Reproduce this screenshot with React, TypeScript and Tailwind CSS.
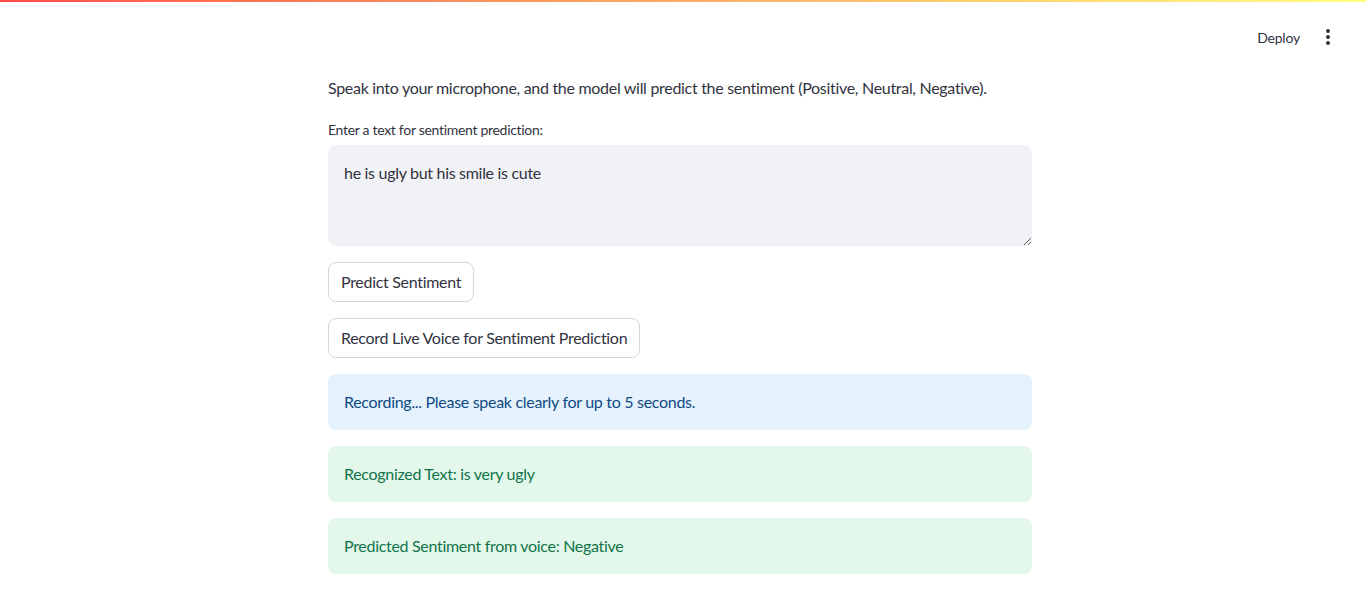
import React from "react";

const font = { fontFamily: '"Source Sans Pro", Lato, "Liberation Sans", sans-serif' };

function MoreIcon() {
  return (
    <svg width="24" height="24" viewBox="0 0 24 24" fill="#31333f">
      <circle cx="12" cy="6" r="2" />
      <circle cx="12" cy="12" r="2" />
      <circle cx="12" cy="18" r="2" />
    </svg>
  );
}

function Alert({ kind, children }: { kind: "info" | "success"; children: React.ReactNode }) {
  const cls =
    kind === "info"
      ? "bg-[#e5f2fc] text-[#0e4a84]"
      : "bg-[#e3f7eb] text-[#11744a]";
  return (
    <div className={`h-[56px] rounded-lg px-4 flex items-center text-[16px] tracking-[-0.3px] ${cls}`}>
      {children}
    </div>
  );
}

export default function App() {
  return (
    <div className="relative min-h-[607px] bg-white text-[#31333f]" style={font}>
      {/* decoration bar */}
      <div className="absolute top-0 left-0 right-0 h-[2px] bg-gradient-to-r from-[#ff4b4b] to-[#fffd80]" />

      {/* header */}
      <header className="h-[60px] flex items-center justify-end pr-[26px] gap-4">
        <span className="text-[14px] pt-[14px] tracking-[-0.2px]">Deploy</span>
        <span className="pt-[14px] flex">
          <MoreIcon />
        </span>
      </header>

      {/* main */}
      <main className="w-[704px] ml-[328px] pt-[15px] flex flex-col">
        <p className="text-[16px] leading-[26px] mb-[18px] tracking-[-0.3px]">
          Speak into your microphone, and the model will predict the sentiment (Positive, Neutral, Negative).
        </p>
        <label className="text-[14px] leading-[21px] mb-[5px] tracking-[-0.3px]">Enter a text for sentiment prediction:</label>
        <textarea
          className="h-[101px] w-full rounded-lg bg-[#f0f2f6] px-4 pt-[16px] pb-3 text-[16px] leading-[24px] tracking-[-0.3px] text-[#31333f] outline-none"
          style={font}
          defaultValue="he is ugly but his smile is cute"
        />
        <div className="flex flex-col gap-4 mt-4 items-start">
          <button className="h-[40px] px-3 rounded-lg border border-[#d6d6d9] bg-white text-[16px] tracking-[-0.3px]">
            Predict Sentiment
          </button>
          <button className="h-[40px] px-3 rounded-lg border border-[#d6d6d9] bg-white text-[16px] tracking-[-0.3px]">
            Record Live Voice for Sentiment Prediction
          </button>
        </div>
        <div className="flex flex-col gap-4 mt-4">
          <Alert kind="info">Recording... Please speak clearly for up to 5 seconds.</Alert>
          <Alert kind="success">Recognized Text: is very ugly</Alert>
          <Alert kind="success">Predicted Sentiment from voice: Negative</Alert>
        </div>
      </main>
    </div>
  );
}
